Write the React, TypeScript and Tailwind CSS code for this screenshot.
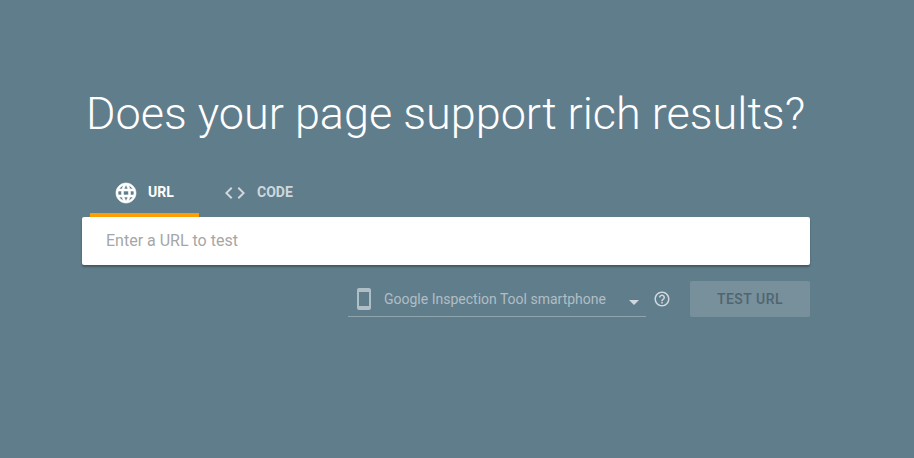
function GlobeIcon() {
    return (
        <svg viewBox="0 0 24 24" className="w-6 h-6 mt-[2px]" fill="#ffffff" stroke="#ffffff" strokeWidth="0.6">
            <path d="M11.99 2C6.47 2 2 6.48 2 12s4.47 10 9.99 10C17.52 22 22 17.52 22 12S17.52 2 11.99 2zm6.93 6h-2.95c-.32-1.25-.78-2.45-1.38-3.56 1.84.63 3.37 1.91 4.33 3.56zM12 4.04c.83 1.2 1.48 2.53 1.91 3.96h-3.82c.43-1.43 1.08-2.76 1.91-3.96zM4.26 14C4.1 13.36 4 12.69 4 12s.1-1.36.26-2h3.38c-.08.66-.14 1.32-.14 2 0 .68.06 1.34.14 2H4.26zm.82 2h2.95c.32 1.25.78 2.45 1.38 3.56-1.84-.63-3.37-1.9-4.33-3.56zm2.95-8H5.08c.96-1.66 2.49-2.93 4.33-3.56C8.81 5.55 8.35 6.75 8.03 8zM12 19.96c-.83-1.2-1.48-2.53-1.91-3.96h3.82c-.43 1.43-1.08 2.76-1.91 3.96zM14.34 14H9.66c-.09-.66-.16-1.32-.16-2 0-.68.07-1.35.16-2h4.68c.09.65.16 1.32.16 2 0 .68-.07 1.34-.16 2zm.25 5.56c.6-1.11 1.06-2.31 1.38-3.56h2.95c-.96 1.65-2.49 2.93-4.33 3.56zM16.36 14c.08-.66.14-1.32.14-2 0-.68-.06-1.34-.14-2h3.38c.16.64.26 1.31.26 2s-.1 1.36-.26 2h-3.38z" />
        </svg>
    );
}

function CodeIcon() {
    return (
        <svg viewBox="0 0 24 24" className="w-6 h-6 mt-[1px]" fill="#cfd8dc">
            <path d="M9.4 16.6L4.8 12l4.6-4.6L8 6l-6 6 6 6 1.4-1.4zm5.2 0l4.6-4.6-4.6-4.6L16 6l6 6-6 6-1.4-1.4z" />
        </svg>
    );
}

function PhoneIcon() {
    return (
        <svg viewBox="0 0 24 24" className="w-6 h-6" fill="#b0bec5">
            <path d="M17 1.01L7 1c-1.1 0-2 .9-2 2v18c0 1.1.9 2 2 2h10c1.1 0 2-.9 2-2V3c0-1.1-.9-1.99-2-1.99zM17 19H7V5h10v14z" />
        </svg>
    );
}

function HelpIcon() {
    return (
        <svg viewBox="0 0 24 24" className="w-[18px] h-[18px]" fill="#cfd8dc">
            <path d="M11 18h2v-2h-2v2zm1-16C6.48 2 2 6.48 2 12s4.48 10 10 10 10-4.48 10-10S17.52 2 12 2zm0 18c-4.41 0-8-3.59-8-8s3.59-8 8-8 8 3.59 8 8-3.59 8-8 8zm0-14c-2.21 0-4 1.79-4 4h2c0-1.1.9-2 2-2s2 .9 2 2c0 2-3 1.75-3 5h2c0-2.25 3-2.5 3-5 0-2.21-1.79-4-4-4z" />
        </svg>
    );
}

export default function App() {
    return (
        <div className="w-[914px] h-[458px] overflow-hidden bg-[#607d8b] font-['Roboto',sans-serif] pt-[84px] pl-[82px]">
            <div className="w-[728px]">
                <h1 className="pl-[4px] text-[45px] leading-[60px] font-light text-white whitespace-nowrap">
                    Does your page support rich results?
                </h1>

                <div className="flex items-stretch pl-[8px] mt-[25px] h-[48px]">
                    <div className="w-[109px] flex items-center gap-[10px] pl-[24px] pt-[2px] border-b-[4px] border-[#ff9e00]">
                        <GlobeIcon />
                        <span className="text-sm font-bold text-white">URL</span>
                    </div>
                    <div className="w-[122px] flex items-center gap-[10px] pl-[24px] pt-[2px] border-b-[4px] border-transparent">
                        <CodeIcon />
                        <span className="text-sm font-bold text-[#cfd8dc]">CODE</span>
                    </div>
                </div>

                <div className="h-[48px] bg-white rounded-[2px] shadow-[0_2px_2px_rgba(0,0,0,0.3)] flex items-center pl-[24px]">
                    <span className="text-base text-[#a6a6a6]">Enter a URL to test</span>
                </div>

                <div className="flex items-center justify-end mt-[16px]">
                    <div className="w-[298px] h-[36px] flex items-center border-b border-[#90a4ae] pl-[4px]">
                        <PhoneIcon />
                        <span className="ml-[8px] text-sm text-[#b0bec5] whitespace-nowrap">Google Inspection Tool smartphone</span>
                        <span className="ml-[23px] mt-[7px] w-0 h-0 border-x-[5px] border-x-transparent border-t-[5px] border-t-[#cfd8dc]" />
                    </div>
                    <div className="ml-[7px] w-[18px] flex justify-center">
                        <HelpIcon />
                    </div>
                    <button className="ml-[19px] w-[120px] h-[36px] rounded-[2px] bg-[#78909c] text-sm font-medium text-[#4f656f] tracking-[0.5px]">
                        TEST URL
                    </button>
                </div>
            </div>
        </div>
    );
}
